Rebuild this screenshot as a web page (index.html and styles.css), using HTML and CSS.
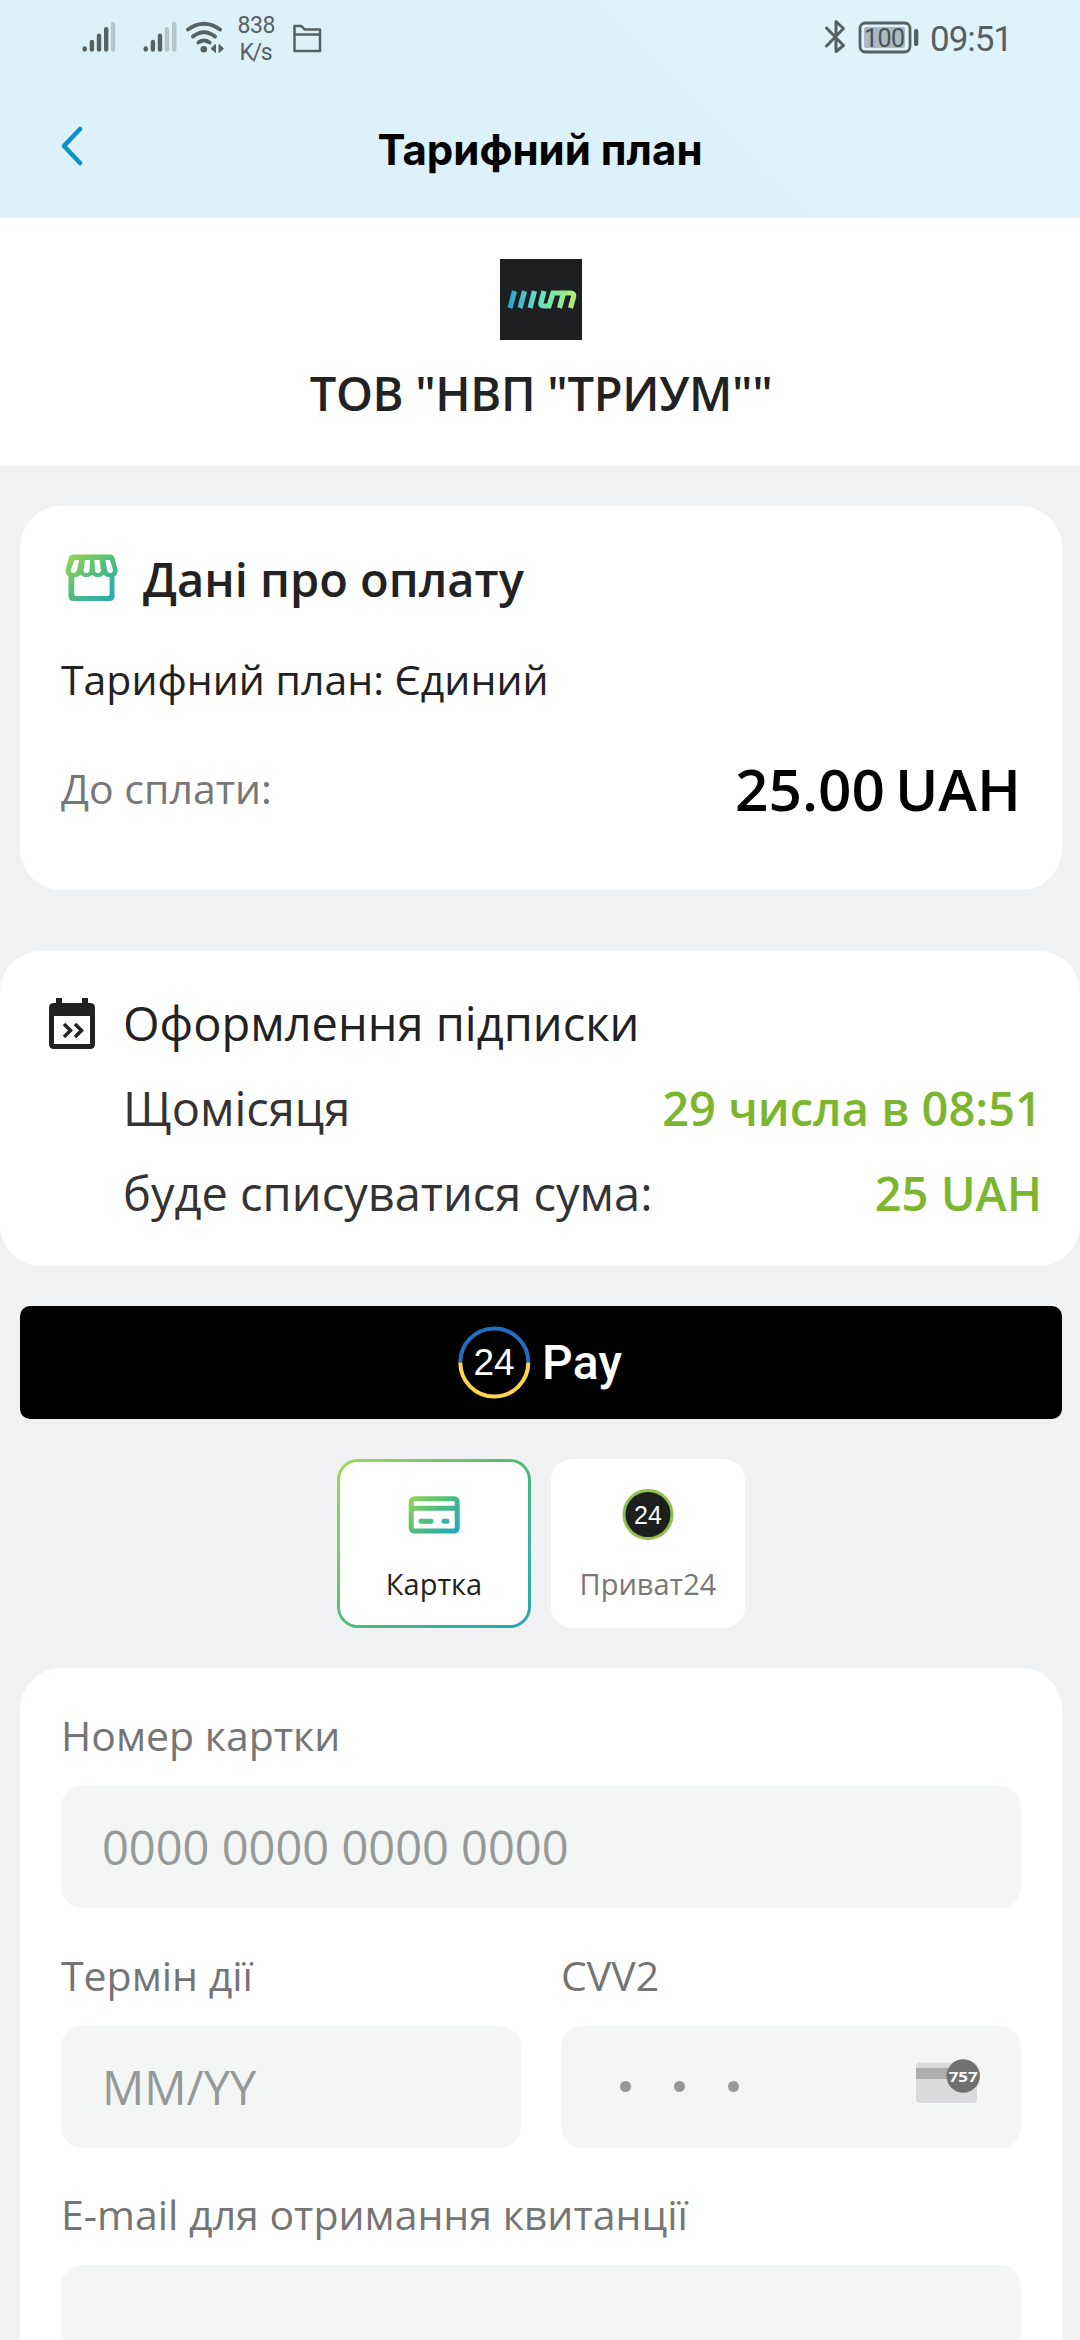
FILE: index.html
```html
<!DOCTYPE html>
<html lang="uk">
<head>
<meta charset="utf-8">
<title>Тарифний план</title>
<link rel="stylesheet" href="styles.css">
</head>
<body>
<div class="screen">
  <header class="header">
    <div class="status">
      <svg class="status-left" width="250" height="80" viewBox="80 0 250 80">
        <g stroke="#556163" stroke-width="4.4" stroke-linecap="round">
          <path d="M84.7 48.500v1M91.900 42v7.500M99 35.700v13.800M106.200 29.200v20.300"/>
          <path d="M145.700 48.500v1M152.900 42v7.500M160 35.700v13.800"/>
          <path d="M113 24v25.500M167 29.200v20.300M174.200 24v25.500" stroke="#b4c5cc"/>
        </g>
        <g fill="none" stroke="#556163" stroke-width="4" stroke-linecap="round">
          <path d="M188 29.500q16-11.500 32 0M193 36.500q11-8.500 22 0M198.500 42.500q5.500-4 11 0"/>
        </g>
        <circle cx="203.800" cy="49.300" r="3.300" fill="#556163"/>
        <path d="M211 48.500l4.500-4v8zM223.500 48.500l-4.500-4v8z" fill="#556163" stroke="#556163" stroke-linejoin="round"/>
        <g class="net-text" fill="#556163">
          <text x="237.500" y="33" textLength="38">838</text>
          <text x="239.500" y="60" textLength="33">K/s</text>
        </g>
        <path d="M294.500 26h7l3 3.500h15.500v21.500h-25.500zM294.500 34.500h25" fill="none" stroke="#556163" stroke-width="2.500" stroke-linejoin="round"/>
      </svg>
      <svg class="status-right" width="192" height="80" viewBox="820 0 192 80">
        <path d="M826.500 28l17 17.500-7.500 6v-30l7.500 7-17 17.500" fill="none" stroke="#556163" stroke-width="3" stroke-linecap="round" stroke-linejoin="round"/>
        <rect x="860" y="23" width="50" height="29" rx="5.500" fill="none" stroke="#556163" stroke-width="2.800"/>
        <rect x="864" y="27" width="41" height="21" rx="2" fill="#a9bac2"/>
        <rect x="914" y="29" width="4.300" height="17" rx="2" fill="#556163"/>
        <text class="battery-text" x="864" y="46.500" textLength="41">100</text>
        <text class="clock" x="930" y="51" textLength="83">09:51</text>
      </svg>
    </div>
    <div class="nav">
      <svg class="back" width="24" height="42" viewBox="0 0 24 42"><path d="M20 3L4 20 20 37" fill="none" stroke="#0d90c9" stroke-width="4.500" stroke-linecap="round" stroke-linejoin="round"/></svg>
      <h1 class="title">Тарифний план</h1>
    </div>
  </header>

  <section class="merchant">
    <svg class="logo" width="82" height="81" viewBox="0 0 82 81">
      <defs><linearGradient id="logo-g" gradientUnits="userSpaceOnUse" x1="8" y1="0" x2="76" y2="0"><stop offset="0" stop-color="#2f9fd0"/><stop offset=".42" stop-color="#5fe0c8"/><stop offset=".62" stop-color="#74e8a4"/><stop offset="1" stop-color="#b4ec70"/></linearGradient></defs>
      <rect width="82" height="81" fill="#1d1f20"/>
      <path d="M14.500 32L10 49M24.500 32L20 49M34.500 32L30 49M44 32L41 43.500Q40 47 44 47h5l4-13h17.500q4 0 3 4L70.500 49M63 36L59.500 49" fill="none" stroke="url(#logo-g)" stroke-width="5.200"/>
    </svg>
    <h2 class="merchant-name">ТОВ "НВП "ТРИУМ""</h2>
  </section>

  <section class="card payment">
    <div class="payment-head">
      <svg class="shop" width="54" height="50" viewBox="0 0 54 50">
        <defs><linearGradient id="shop-g" x1="0" y1="0" x2="1" y2="1"><stop offset="0" stop-color="#9bd653"/><stop offset=".5" stop-color="#50bd7c"/><stop offset="1" stop-color="#22a9bd"/></linearGradient></defs>
        <path fill="url(#shop-g)" fill-rule="evenodd" d="M8 1.500h37q3.500 0 4.500 3.500l3 11q.700 5-3 7.500v19.500q0 5-5 5h-36q-5 0-5-5V23.500Q-.2 21 .8 16l3-11Q4.800 1.500 8 1.500zM9.200 24.300v17q0 1.700 1.700 1.700h32q1.700 0 1.700-1.700v-17q-3.500 0-6-2.500-5.500 5-11.500 0-6 5-11.500 0-2.500 2.500-6.400 2.500zM9.500 7L6 16.500q-.5 3.500 2.500 3.500 3 0 3.500-3.500L14 7zM20 7l-1.500 10q0 3 3 3t3-3L25 7zM29.500 7l.5 10q0 3 3 3t3-3L34.500 7zM40.500 7l1.500 9.500q.5 3.500 3.500 3.500 3 0 2.300-3.500L45 7z"/>
      </svg>
      <h2 class="payment-title">Дані про оплату</h2>
    </div>
    <p class="plan">Тарифний план: Єдиний</p>
    <div class="total">
      <span class="total-label">До сплати:</span>
      <span class="total-sum"><span>25.00</span><span>UAH</span></span>
    </div>
  </section>

  <section class="subscription">
    <svg class="calendar" width="46" height="52" viewBox="0 0 46 52">
      <path fill="#222" fill-rule="evenodd" d="M7 0h6v5h20V0h6v5h2q5 0 5 5v36q0 5-5 5H5q-5 0-5-5V10q0-5 5-5h2zM5 18v28h36V18z"/>
      <path d="M15 26l6.500 6.500L15 39M26 26l6.500 6.500L26 39" fill="none" stroke="#222" stroke-width="3.500"/>
    </svg>
    <div class="sub-body">
      <div class="sub-row sub-title">Оформлення підписки</div>
      <div class="sub-row"><span>Щомісяця</span><b>29 числа в 08:51</b></div>
      <div class="sub-row"><span>буде списуватися сума:</span><b>25 UAH</b></div>
    </div>
  </section>

  <div class="pay-button">
    <svg width="166" height="113" viewBox="459 0 166 113">
      <path d="M461.300 56.500a34 34 0 0 1 68 0" fill="none" stroke="#216fc2" stroke-width="4"/>
      <path d="M461.300 56.500a34 34 0 0 0 68 0" fill="none" stroke="#ffd54b" stroke-width="4"/>
      <text class="pay-24" x="474.500" y="69" textLength="41">24</text>
      <text class="pay-word" x="543" y="72.500" textLength="80">Pay</text>
    </svg>
  </div>

  <div class="methods">
    <div class="method active">
      <svg class="method-icon" width="52" height="52" viewBox="0 0 52 52">
        <defs><linearGradient id="card-g" gradientUnits="userSpaceOnUse" x1="4" y1="4" x2="46" y2="46"><stop offset="0" stop-color="#9bd653"/><stop offset=".5" stop-color="#50bd7c"/><stop offset="1" stop-color="#22a9bd"/></linearGradient></defs>
        <g fill="none" stroke="url(#card-g)" stroke-width="5"><rect x="3.200" y="10.700" width="46" height="32.300" rx="3"/><path d="M3 20.200h46"/><path d="M13 33.200h10M36 33.200h3" stroke-linecap="round"/></g>
      </svg>
      <span>Картка</span>
    </div>
    <div class="method">
      <svg class="method-icon" width="52" height="52" viewBox="0 0 52 52">
        <circle cx="26" cy="26.500" r="24" fill="#1d1e1e" stroke="#8fbf4d" stroke-width="3"/>
        <text class="p24" x="12" y="35.500" textLength="28">24</text>
      </svg>
      <span>Приват24</span>
    </div>
  </div>

  <section class="card form">
    <div class="field"><div class="label">Номер картки</div><div class="input">0000 0000 0000 0000</div></div>
    <div class="pair">
      <div class="field"><div class="label">Термін дії</div><div class="input">MM/YY</div></div>
      <div class="field"><div class="label">CVV2</div>
        <div class="input cvv">
          <span class="dots"><i></i><i></i><i></i></span>
          <svg width="66" height="44" viewBox="0 0 66 44">
            <rect y="3.500" width="61" height="40.500" rx="4" fill="#dadadc"/>
            <path d="M0 9h61v11H0z" fill="#adadad"/>
            <circle cx="47.200" cy="17" r="16.700" fill="#707070"/>
            <text class="cvv-text" x="32.700" y="22.500" textLength="29" lengthAdjust="spacingAndGlyphs">757</text>
          </svg>
        </div>
      </div>
    </div>
    <div class="field"><div class="label">E-mail для отримання квитанції</div><div class="input"></div></div>
  </section>
</div>
</body>
</html>
```
FILE: styles.css
```css
* { box-sizing: border-box; }
html, body { margin: 0; height: 2340px; overflow: hidden; }
h1, h2, p { margin: 0; }
svg { display: block; flex: none; }

.screen {
  width: 1080px;
  height: 2340px;
  overflow: hidden;
  background: #eff1f3;
  color: #222;
  font-family: "Open Sans", "Noto Sans", sans-serif;
  font-size: 47px;
}

/* Header */
.header { height: 218px; background: linear-gradient(45deg, #ddf1fb 60%, #dff3fc 75%); }
.status { display: flex; justify-content: space-between; height: 80px; padding: 0 68px 0 80px; font-family: Roboto, sans-serif; }
.net-text { font-size: 23px; }
.battery-text { font-size: 25px; fill: #46545a; }
.clock { font-size: 35px; fill: #556163; }
.nav { display: grid; grid-template-columns: 100px 1fr 100px; height: 138px; }
.back { margin: 46px 0 0 60px; }
.title { height: 138px; font-family: Inter, sans-serif; font-size: 42px; font-weight: 700; line-height: 139px; text-align: center; color: #000; white-space: nowrap; }

/* Merchant */
.merchant { display: flex; flex-direction: column; align-items: center; height: 248px; padding-top: 41px; background: #fff; }
.logo { margin-left: 2px; }
.merchant-name { margin-top: 20px; padding-left: 2px; font-size: 47px; font-weight: 600; letter-spacing: -0.3px; line-height: 67px; white-space: nowrap; }

/* Payment card */
.card { width: 1042px; margin-left: 20px; padding: 0 41px; border-radius: 41px; background: #fff; }
.payment { height: 384px; margin-top: 40px; padding-top: 39px; }
.payment-head { display: flex; height: 66px; }
.shop { margin: 8px 0 0 4px; }
.payment-title { margin-left: 24px; font-size: 47px; font-weight: 600; line-height: 69px; }
.plan { margin-top: 38px; font-size: 41px; line-height: 60px; }
.total { display: flex; justify-content: space-between; height: 80px; margin-top: 38px; line-height: 80px; }
.total-label { font-size: 41px; color: #777; line-height: 82px; }
.total-sum { display: flex; gap: 10px; font-size: 58.500px; font-weight: 600; color: #000; line-height: 83px; }

/* Subscription */
.subscription { display: flex; height: 315px; margin-top: 61px; padding: 30px 38px 0 49px; border-radius: 41px; background: #fff; }
.calendar { margin-top: 17px; }
.sub-body { flex: 1; margin-left: 28px; }
.sub-row { display: flex; justify-content: space-between; height: 85px; line-height: 85px; color: #333; }
.sub-row b { font-weight: 600; color: #7cb62e; }
.sub-title { color: #222; }

/* 24 Pay */
.pay-button { display: flex; justify-content: center; width: 1042px; height: 113px; margin: 40px 0 0 20px; border-radius: 10px; background: #000; }
.pay-24 { font-family: "Liberation Sans", sans-serif; font-size: 37px; fill: #fff; }
.pay-word { font-family: Roboto, sans-serif; font-size: 48px; font-weight: 500; fill: #fff; }

/* Payment methods */
.methods { display: flex; justify-content: center; gap: 20px; margin-top: 40px; padding-left: 2px; }
.method { display: flex; flex-direction: column; align-items: center; width: 194px; height: 169px; padding-top: 26px; border: 3px solid transparent; border-radius: 21px; background: #fff; color: #777; font-size: 29px; line-height: 40px; }
.method.active { color: #222; background: linear-gradient(#fff, #fff) padding-box, linear-gradient(135deg, #a0d957, #50bb7b 50%, #27a6b6) border-box; }
.method span { margin-top: 24px; }
.p24 { font-family: "Liberation Sans", sans-serif; font-size: 25px; fill: #fff; }

/* Card form */
.form { height: 720px; margin-top: 40px; padding-top: 34px; }
.field { flex: 1; margin-bottom: 33.500px; }
.label { height: 84px; padding-top: 5px; color: #757575; font-size: 41px; line-height: 56px; }
.input { display: flex; align-items: center; height: 122px; padding: 0 41px; border-radius: 21px; background: #f4f6f5; color: #979999; font-size: 47px; }
.pair { display: flex; gap: 40px; }
.cvv { justify-content: space-between; padding: 0 39px 0 59px; }
.cvv svg { margin-top: -11px; }
.dots { display: flex; gap: 43px; }
.dots i { width: 11px; height: 11px; border-radius: 50%; background: #979999; }
.cvv-text { font-family: "Open Sans", sans-serif; font-size: 15px; font-weight: 700; fill: #fff; }
```
